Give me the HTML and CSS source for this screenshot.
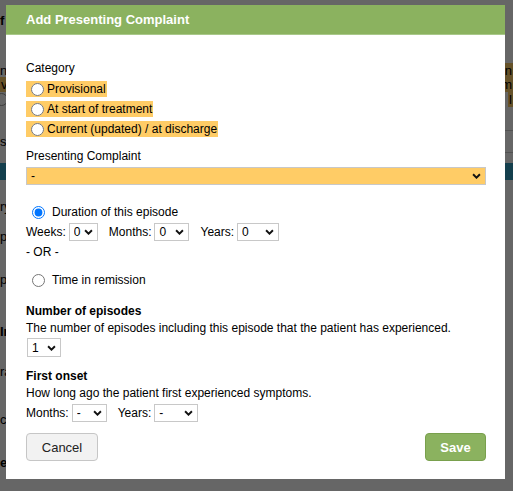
FILE: index.html
```html
<!DOCTYPE html>
<html>
<head>
<meta charset="utf-8">
<link rel="stylesheet" href="styles.css">
</head>
<body>
<div class="page">
  <div class="brow r-a"><b>f</b><span></span></div>
  <div class="brow r-c"><span>n</span><span class="ohl">n</span></div>
  <div class="brow r-d"><span class="ohl">vi</span><span class="ohl">m</span></div>
  <div class="brow r-e"><span class="bradio"></span><span class="ohl">l</span></div>
  <div class="brow r-g"><span>s</span><span class="lined"></span></div>
  <div class="bar"></div>
  <div class="btext t1">ry</div>
  <div class="btext t2">p</div>
  <div class="btext t3">p</div>
  <div class="btext t4"><b>In</b></div>
  <div class="btext t5">ra</div>
  <div class="btext t6">c</div>
  <div class="btext t7"><b>e</b></div>
</div>
<div class="overlay"></div>
<div class="dialog">
  <div class="dhead">Add Presenting Complaint</div>
  <div class="dbody">
    <div class="label">Category</div>
    <div class="cats">
      <label class="hl"><input type="radio" name="cat">Provisional</label>
      <label class="hl"><input type="radio" name="cat">At start of treatment</label>
      <label class="hl"><input type="radio" name="cat">Current (updated) / at discharge</label>
    </div>
    <div class="label pc">Presenting Complaint</div>
    <span class="sel full"><select class="orange"><option>-</option></select><svg class="chev" viewBox="0 0 10 7"><path d="M1 1.5 L5 5.5 L9 1.5" fill="none" stroke="#111" stroke-width="2.2"/></svg></span>

    <label class="opt dur"><input type="radio" name="mode" checked>Duration of this episode</label>
    <div class="row">
      <span>Weeks:</span><span class="sel w1"><select><option>0</option></select><svg class="chev" viewBox="0 0 10 7"><path d="M1 1.5 L5 5.5 L9 1.5" fill="none" stroke="#111" stroke-width="2.2"/></svg></span>
      <span class="g">Months:</span><span class="sel w2"><select><option>0</option></select><svg class="chev" viewBox="0 0 10 7"><path d="M1 1.5 L5 5.5 L9 1.5" fill="none" stroke="#111" stroke-width="2.2"/></svg></span>
      <span class="g">Years:</span><span class="sel w3"><select><option>0</option></select><svg class="chev" viewBox="0 0 10 7"><path d="M1 1.5 L5 5.5 L9 1.5" fill="none" stroke="#111" stroke-width="2.2"/></svg></span>
    </div>
    <div class="or">- OR -</div>
    <label class="opt rem"><input type="radio" name="mode">Time in remission</label>

    <div class="h">Number of episodes</div>
    <div class="desc">The number of episodes including this episode that the patient has experienced.</div>
    <span class="sel w4 ne"><select><option>1</option></select><svg class="chev" viewBox="0 0 10 7"><path d="M1 1.5 L5 5.5 L9 1.5" fill="none" stroke="#111" stroke-width="2.2"/></svg></span>

    <div class="h fo">First onset</div>
    <div class="desc">How long ago the patient first experienced symptoms.</div>
    <div class="row r2">
      <span>Months:</span><span class="sel w2"><select><option>-</option></select><svg class="chev" viewBox="0 0 10 7"><path d="M1 1.5 L5 5.5 L9 1.5" fill="none" stroke="#111" stroke-width="2.2"/></svg></span>
      <span class="g">Years:</span><span class="sel w5"><select><option>-</option></select><svg class="chev" viewBox="0 0 10 7"><path d="M1 1.5 L5 5.5 L9 1.5" fill="none" stroke="#111" stroke-width="2.2"/></svg></span>
    </div>

    <div class="btns">
      <button class="btn cancel">Cancel</button>
      <button class="btn save">Save</button>
    </div>
  </div>
</div>
</body>
</html>
```

FILE: styles.css
```css
html, body { margin: 0; padding: 0; }
body {
  width: 513px; height: 491px; overflow: hidden; position: relative;
  font-family: "Liberation Sans", Arial, sans-serif; font-size: 12px; color: #000; background: #fff;
}
.page { width: 513px; }
.brow { display: flex; justify-content: space-between; align-items: center; font-size: 13px; }
.r-a { height: 40px; }
.r-c { height: 14px; margin-top: 23px; }
.r-d { height: 14px; }
.r-e { height: 16px; }
.r-g { height: 23px; margin-top: 23px; }
.ohl { background: #ffcc66; padding: 0 1px; }
.bradio { width: 11px; height: 11px; border: 1px solid #999; border-radius: 50%; margin-left: -5px; }
.lined { width: 8px; height: 21px; border-top: 1px solid #ccc; border-bottom: 1px solid #ccc; }
.bar { height: 17px; margin-top: 10px; background: #329ec1; }
.btext { font-size: 13px; line-height: 14px; height: 14px; }
.t1 { margin-top: 20px; }
.t2 { margin-top: 16px; }
.t3 { margin-top: 29px; }
.t4 { margin-top: 38px; }
.t5 { margin-top: 26px; }
.t6 { margin-top: 34px; }
.t7 { margin-top: 29px; }

.overlay { position: absolute; inset: 0; background: rgba(0,0,0,0.6); }

.dialog {
  position: absolute; left: 6px; top: 5px; width: 499px; height: 474px;
  background: #fff; box-sizing: border-box;
}
.dhead {
  height: 30px; background: #8bb25f; color: #fff; font-weight: bold; font-size: 13px;
  line-height: 30px; padding-left: 20px; border-bottom: 1px solid #a9c88a; box-sizing: border-box;
}
.dbody { padding: 26px 19px 0 20px; display: flex; flex-direction: column; align-items: flex-start; }
.label { line-height: 14px; }
.cats { display: flex; flex-direction: column; align-items: flex-start; gap: 4px; margin-top: 6px; }
.hl { background: #ffcc66; display: flex; align-items: center; height: 16px; padding-right: 1px; }
.hl input { margin: 0 3px 0 5px; width: 13px; height: 13px; }
.pc { margin-top: 12px; }
.sel { position: relative; display: inline-block; height: 18px; }
.sel select {
  appearance: none; -webkit-appearance: none; height: 18px; width: 100%; box-sizing: border-box;
  border: 1px solid #c8c8c8; background: #fff; font-family: inherit; font-size: 12px;
  padding: 0 0 0 4px; margin: 0; color: #000; border-radius: 0;
}
.sel select.orange { background: #ffcc66; }
.chev { position: absolute; right: 5px; top: 6px; width: 9px; height: 6px; pointer-events: none; }
.full { width: 460px; margin-top: 4px; }
.w1 { width: 29px; }
.w2 { width: 35px; }
.w3 { width: 42px; }
.w4 { width: 34px; height: 19px; }
.w4 select { height: 19px; }
.w4 .chev { top: 7px; }
.w5 { width: 44px; }
.opt { display: flex; align-items: center; height: 16px; }
.opt input { margin: 0 7px 0 6px; width: 13px; height: 13px; }
.dur { margin-top: 19px; }
.row { display: flex; align-items: center; margin-top: 3px; height: 18px; }
.row .sel { margin-left: 3px; }
.row .g { margin-left: 11px; }
.or { margin-top: 4px; line-height: 14px; }
.rem { margin-top: 13px; }
.h { font-weight: bold; margin-top: 16px; line-height: 14px; }
.fo { margin-top: 12px; }
.desc { line-height: 14px; margin-top: 3px; }
.ne { margin-top: 3px; margin-left: 1px; }
.r2 { margin-top: 4px; }
.btns { display: flex; justify-content: space-between; width: 460px; margin-top: 11px; }
.btn {
  height: 28px; font-family: inherit; font-size: 13px; border-radius: 4px; padding: 0; margin: 0;
}
.cancel { width: 72px; background: #f2f2f2; border: 1px solid #c6c6c6; color: #222; }
.save { width: 61px; background: #8bb25f; border: 1px solid #79a04d; color: #fff; font-weight: bold; }
```
